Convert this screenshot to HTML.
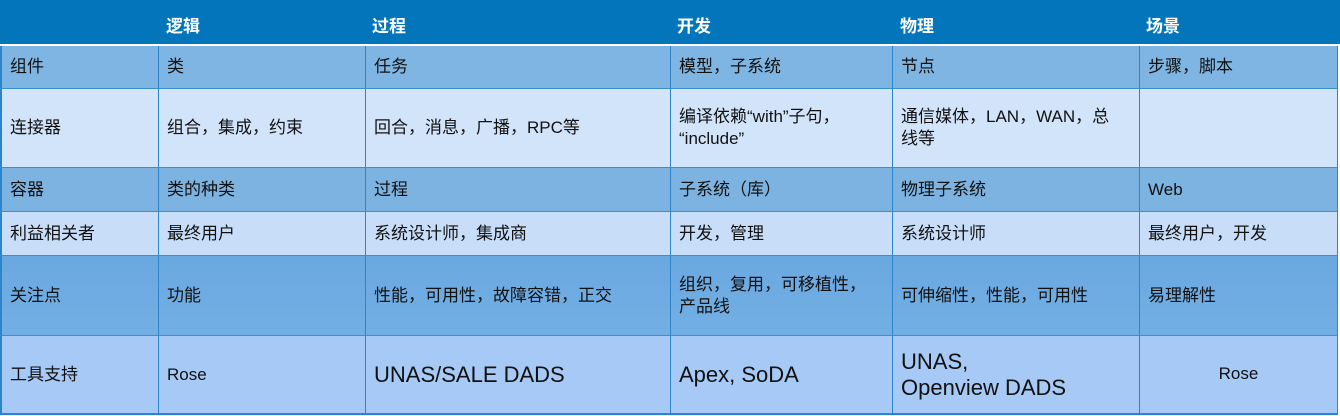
<!DOCTYPE html>
<html><head><meta charset="utf-8"><style>
*{margin:0;padding:0;box-sizing:border-box}
body{width:1340px;height:416px;background:#fff;overflow:hidden;position:relative;font-family:"Liberation Sans","Noto Sans CJK SC",sans-serif;color:#111}
.hdr{position:absolute;left:0;top:0;width:1340px;height:44px;background:#0275bb}
.hdr span{position:absolute;top:12px;color:#fff;font-weight:bold;font-size:17px}
.row{position:absolute;left:0;width:1338px;border-bottom:1px solid #3a8fd0}
.c{position:absolute;top:0;bottom:0;display:flex;align-items:center;padding-left:8px;font-size:17px;line-height:22px;border-left:1px solid #2a85cc;white-space:nowrap}
.big{font-size:22px;line-height:26px}
</style></head><body>
<div class="hdr"><span style="left:166px">逻辑</span><span style="left:372px">过程</span><span style="left:677px">开发</span><span style="left:900px">物理</span><span style="left:1146px">场景</span></div>
<div style="position:absolute;left:0;top:44px;width:1340px;height:2px;background:#fff"></div>
<div style="position:absolute;left:1338px;top:46px;width:2px;height:370px;background:#fff"></div>

<div class="row" style="top:46px;height:43px;background:#7fb5e2">
<div class="c" style="left:0;width:158px;border-left:2px solid #2a85cc">组件</div><div class="c" style="left:158px;width:207px">类</div><div class="c" style="left:365px;width:305px">任务</div><div class="c" style="left:670px;width:222px">模型，子系统</div><div class="c" style="left:892px;width:247px">节点</div><div class="c" style="left:1139px;width:199px;border-right:1px solid #2a85cc">步骤，脚本</div></div>

<div class="row" style="top:89px;height:79px;background:#d2e4f9">
<div class="c" style="left:0;width:158px;border-left:2px solid #2a85cc">连接器</div><div class="c" style="left:158px;width:207px">组合，集成，约束</div><div class="c" style="left:365px;width:305px">回合，消息，广播，RPC等</div><div class="c" style="left:670px;width:222px">编译依赖“with”子句，<br>“include”</div><div class="c" style="left:892px;width:247px">通信媒体，LAN，WAN，总<br>线等</div><div class="c" style="left:1139px;width:199px;border-right:1px solid #2a85cc"></div></div>

<div class="row" style="top:168px;height:44px;background:#7cb3e1">
<div class="c" style="left:0;width:158px;border-left:2px solid #2a85cc">容器</div><div class="c" style="left:158px;width:207px">类的种类</div><div class="c" style="left:365px;width:305px">过程</div><div class="c" style="left:670px;width:222px">子系统（库）</div><div class="c" style="left:892px;width:247px">物理子系统</div><div class="c" style="left:1139px;width:199px;border-right:1px solid #2a85cc">Web</div></div>

<div class="row" style="top:212px;height:44px;background:#c7ddf8">
<div class="c" style="left:0;width:158px;border-left:2px solid #2a85cc">利益相关者</div><div class="c" style="left:158px;width:207px">最终用户</div><div class="c" style="left:365px;width:305px">系统设计师，集成商</div><div class="c" style="left:670px;width:222px">开发，管理</div><div class="c" style="left:892px;width:247px">系统设计师</div><div class="c" style="left:1139px;width:199px;border-right:1px solid #2a85cc">最终用户，开发</div></div>

<div class="row" style="top:256px;height:80px;background:linear-gradient(#6aa8e0,#72afe4)">
<div class="c" style="left:0;width:158px;border-left:2px solid #2a85cc">关注点</div><div class="c" style="left:158px;width:207px">功能</div><div class="c" style="left:365px;width:305px">性能，可用性，故障容错，正交</div><div class="c" style="left:670px;width:222px">组织，复用，可移植性，<br>产品线</div><div class="c" style="left:892px;width:247px">可伸缩性，性能，可用性</div><div class="c" style="left:1139px;width:199px;border-right:1px solid #2a85cc">易理解性</div></div>

<div class="row" style="top:336px;height:79px;background:#a6c9f5;border-bottom:2px solid #2a85cc">
<div class="c" style="left:0;width:158px;border-left:2px solid #2a85cc">工具支持</div><div class="c" style="left:158px;width:207px">Rose</div><div class="c big" style="left:365px;width:305px">UNAS/SALE DADS</div><div class="c big" style="left:670px;width:222px">Apex, SoDA</div><div class="c big" style="left:892px;width:247px">UNAS,<br>Openview DADS</div><div class="c" style="left:1139px;width:199px;border-right:1px solid #2a85cc;justify-content:center;padding-left:0;padding-bottom:2px">Rose</div></div>
</body></html>
